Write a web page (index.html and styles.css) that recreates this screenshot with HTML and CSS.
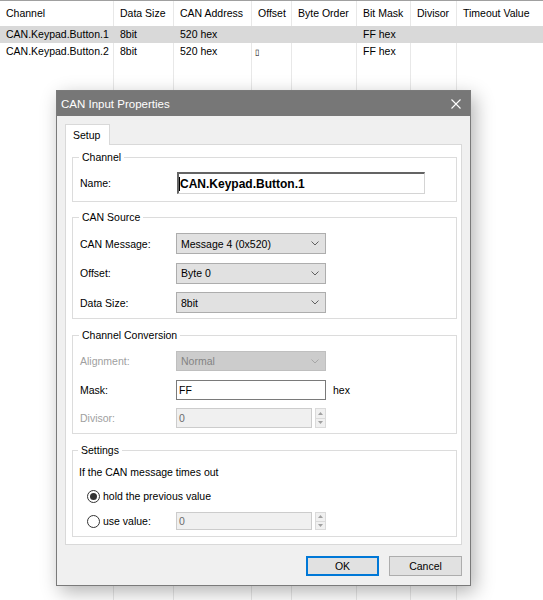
FILE: index.html
```html
<!DOCTYPE html>
<html lang="en">
<head>
    <meta charset="UTF-8">
    <title>CAN Input Properties</title>
    <link rel="stylesheet" href="styles.css">
</head>
<body>
    <div class="list">
        <div class="cell head">Channel</div>
        <div class="cell head">Data Size</div>
        <div class="cell head">CAN Address</div>
        <div class="cell head">Offset</div>
        <div class="cell head">Byte Order</div>
        <div class="cell head">Bit Mask</div>
        <div class="cell head">Divisor</div>
        <div class="cell head">Timeout Value</div>

        <div class="cell selected">CAN.Keypad.Button.1</div>
        <div class="cell selected">8bit</div>
        <div class="cell selected">520 hex</div>
        <div class="cell selected"></div>
        <div class="cell selected"></div>
        <div class="cell selected">FF hex</div>
        <div class="cell selected"></div>
        <div class="cell selected"></div>

        <div class="cell">CAN.Keypad.Button.2</div>
        <div class="cell">8bit</div>
        <div class="cell">520 hex</div>
        <div class="cell"><span class="missing">▯</span></div>
        <div class="cell"></div>
        <div class="cell">FF hex</div>
        <div class="cell"></div>
        <div class="cell"></div>

        <div class="cell"></div>
        <div class="cell"></div>
        <div class="cell"></div>
        <div class="cell"></div>
        <div class="cell"></div>
        <div class="cell"></div>
        <div class="cell"></div>
        <div class="cell"></div>
    </div>

    <div class="dialog">
        <div class="titlebar">
            <span>CAN Input Properties</span>
            <svg class="close" width="10" height="10" viewBox="0 0 10 10">
                <path d="M0.5 0.5 L9.5 9.5 M9.5 0.5 L0.5 9.5" stroke="#fff" stroke-width="1.1" fill="none"/>
            </svg>
        </div>
        <div class="dialog-body">
            <div class="tabs"><div class="tab">Setup</div></div>
            <div class="tab-panel">
                <fieldset class="group group-channel">
                    <legend>Channel</legend>
                    <div class="field">
                        <label>Name:</label>
                        <div class="name-input"><span class="caret"></span>CAN.Keypad.Button.1</div>
                    </div>
                </fieldset>

                <fieldset class="group group-source">
                    <legend>CAN Source</legend>
                    <div class="field">
                        <label>CAN Message:</label>
                        <div class="combo">Message 4 (0x520)<svg class="chevron" width="8" height="5" viewBox="0 0 8 5"><path d="M0.5 0.5 L4 4 L7.5 0.5" stroke="#606060" fill="none"/></svg></div>
                    </div>
                    <div class="field">
                        <label>Offset:</label>
                        <div class="combo">Byte 0<svg class="chevron" width="8" height="5" viewBox="0 0 8 5"><path d="M0.5 0.5 L4 4 L7.5 0.5" stroke="#606060" fill="none"/></svg></div>
                    </div>
                    <div class="field">
                        <label>Data Size:</label>
                        <div class="combo">8bit<svg class="chevron" width="8" height="5" viewBox="0 0 8 5"><path d="M0.5 0.5 L4 4 L7.5 0.5" stroke="#606060" fill="none"/></svg></div>
                    </div>
                </fieldset>

                <fieldset class="group group-conversion">
                    <legend>Channel Conversion</legend>
                    <div class="field">
                        <label class="disabled">Alignment:</label>
                        <div class="combo combo-disabled">Normal<svg class="chevron" width="8" height="5" viewBox="0 0 8 5"><path d="M0.5 0.5 L4 4 L7.5 0.5" stroke="#a6a6a6" fill="none"/></svg></div>
                    </div>
                    <div class="field">
                        <label>Mask:</label>
                        <div class="text-input">FF</div>
                        <span class="unit">hex</span>
                    </div>
                    <div class="field">
                        <label class="disabled">Divisor:</label>
                        <div class="num-input">0</div>
                        <div class="spinner">
                            <span><svg width="5" height="3" viewBox="0 0 5 3"><path d="M0 3 L2.5 0 L5 3 Z" fill="#a0a0a0"/></svg></span>
                            <span><svg width="5" height="3" viewBox="0 0 5 3"><path d="M0 0 L2.5 3 L5 0 Z" fill="#a0a0a0"/></svg></span>
                        </div>
                    </div>
                </fieldset>

                <fieldset class="group group-settings">
                    <legend>Settings</legend>
                    <div class="settings-text">If the CAN message times out</div>
                    <div class="radio-row">
                        <span class="radio checked"></span>
                        <span class="radio-label">hold the previous value</span>
                    </div>
                    <div class="radio-row">
                        <span class="radio"></span>
                        <span class="radio-label radio-label-fixed">use value:</span>
                        <div class="num-input">0</div>
                        <div class="spinner">
                            <span><svg width="5" height="3" viewBox="0 0 5 3"><path d="M0 3 L2.5 0 L5 3 Z" fill="#a0a0a0"/></svg></span>
                            <span><svg width="5" height="3" viewBox="0 0 5 3"><path d="M0 0 L2.5 3 L5 0 Z" fill="#a0a0a0"/></svg></span>
                        </div>
                    </div>
                </fieldset>
            </div>
            <div class="buttons">
                <button class="btn btn-default">OK</button>
                <button class="btn">Cancel</button>
            </div>
        </div>
    </div>
</body>
</html>
```

FILE: styles.css
```css
body {
    margin: 0;
    font-family: "Liberation Sans", Arial, sans-serif;
    font-size: 10.5px;
    color: #000;
    background-color: #fff;
}

/* channel list behind the dialog */
.list {
    display: grid;
    grid-template-columns: 114px 60px 78px 40px 65px 54px 46px 1fr;
    grid-template-rows: 25px 17px 17px 1fr;
    height: 599px;
    border-top: 1px solid #a0a0a0;
}
.cell {
    border-right: 1px solid #e8e8e8;
    padding-left: 6px;
    line-height: 17px;
    white-space: nowrap;
    overflow: hidden;
}
.cell:nth-child(8n) {
    border-right: none;
}
.head {
    line-height: 25px;
}
.selected {
    background-color: #d9d9d9;
    border-right-color: #d9d9d9;
}
.missing {
    margin-left: -3px;
    font-size: 8px;
}

/* dialog */
.dialog {
    position: absolute;
    left: 56px;
    top: 90px;
    width: 415px;
    height: 496px;
    box-sizing: border-box;
    border: 1px solid #7a7a7a;
    background-color: #f0f0f0;
    box-shadow: 4px 6px 18px rgba(0, 0, 0, 0.3);
    display: flex;
    flex-direction: column;
}
.titlebar {
    height: 25px;
    background-color: #777;
    color: #fff;
    font-size: 11.5px;
    display: flex;
    align-items: center;
    justify-content: space-between;
    padding: 0 9px 0 4px;
}
.dialog-body {
    padding: 8px 8px 0 8px;
}
.tabs {
    display: flex;
}
.tab {
    position: relative;
    width: 45px;
    height: 21px;
    box-sizing: border-box;
    margin-bottom: -1px;
    padding-left: 7px;
    line-height: 20px;
    background-color: #fff;
    border: 1px solid #d9d9d9;
    border-bottom: none;
}
.tab-panel {
    border: 1px solid #d9d9d9;
    background-color: #fff;
    padding: 6px 4px 7px 6px;
}

.group {
    margin: 0;
    min-width: 0;
    border: 1px solid #dcdcdc;
    padding: 8px 7px 7px;
}
.group legend {
    padding: 0 3px;
    margin-left: -1px;
    line-height: 13px;
}
.group-source {
    margin-top: 9px;
    padding: 9px 7px 5px;
}
.group-conversion {
    margin-top: 10px;
    padding: 9px 7px 5px;
}
.group-settings {
    margin-top: 10px;
    padding: 8px 7px 6px 6px;
}

.field {
    display: flex;
    align-items: center;
    height: 21px;
}
.group-source .field + .field {
    margin-top: 8.5px;
}
.group-conversion .field {
    height: 20px;
}
.group-conversion .field + .field {
    margin-top: 8.5px;
}
.group-channel .field {
    height: 22px;
}
.field label {
    width: 96px;
    flex: none;
}
label.disabled {
    color: #a0a0a0;
}

.name-input {
    width: 248px;
    height: 22px;
    box-sizing: border-box;
    margin-left: 1px;
    border-top: 2px solid #646464;
    border-left: 2px solid #646464;
    border-right: 1px solid #d4d4d4;
    border-bottom: 1px solid #d4d4d4;
    font-size: 12px;
    font-weight: bold;
    display: flex;
    align-items: center;
}
.caret {
    width: 1px;
    height: 14px;
    background-color: #000;
}

.combo {
    width: 150px;
    height: 100%;
    box-sizing: border-box;
    border: 1px solid #adadad;
    background-color: #e1e1e1;
    padding: 0 6px 0 4px;
    display: flex;
    align-items: center;
    justify-content: space-between;
}
.combo-disabled {
    background-color: #cccccc;
    border-color: #bfbfbf;
    color: #838383;
}

.text-input {
    width: 150px;
    height: 100%;
    box-sizing: border-box;
    border: 1px solid #7a7a7a;
    padding-left: 2px;
    display: flex;
    align-items: center;
}
.unit {
    margin-left: 7px;
}

.num-input {
    width: 136px;
    height: 100%;
    box-sizing: border-box;
    border: 1px solid #cccccc;
    background-color: #f0f0f0;
    color: #6d6d6d;
    padding-left: 2px;
    display: flex;
    align-items: center;
}
.spinner {
    margin-left: 3px;
    width: 11px;
    height: 100%;
    display: flex;
    flex-direction: column;
}
.spinner span {
    flex: 1;
    box-sizing: border-box;
    border: 1px solid #dadada;
    background-color: #f0f0f0;
    display: flex;
    align-items: center;
    justify-content: center;
}
.spinner span + span {
    border-top: none;
}

.settings-text {
    line-height: 15px;
}
.radio-row {
    display: flex;
    align-items: center;
    height: 18px;
    margin-top: 7px;
    padding-left: 8px;
}
.radio {
    width: 13px;
    height: 13px;
    box-sizing: border-box;
    border: 1px solid #333;
    border-radius: 50%;
    background-color: #fff;
    display: flex;
    align-items: center;
    justify-content: center;
    flex: none;
}
.radio.checked::after {
    content: "";
    width: 7px;
    height: 7px;
    border-radius: 50%;
    background-color: #333;
}
.radio-label {
    margin-left: 3px;
}
.radio-label-fixed {
    width: 73px;
    flex: none;
}

.buttons {
    display: flex;
    justify-content: flex-end;
    gap: 10px;
    margin-top: 11px;
}
.btn {
    width: 73px;
    height: 20px;
    box-sizing: border-box;
    border: 1px solid #adadad;
    background-color: #e1e1e1;
    font-family: inherit;
    font-size: 10.5px;
    color: #000;
    padding: 0;
}
.btn-default {
    border: 2px solid #0078d7;
}
```
